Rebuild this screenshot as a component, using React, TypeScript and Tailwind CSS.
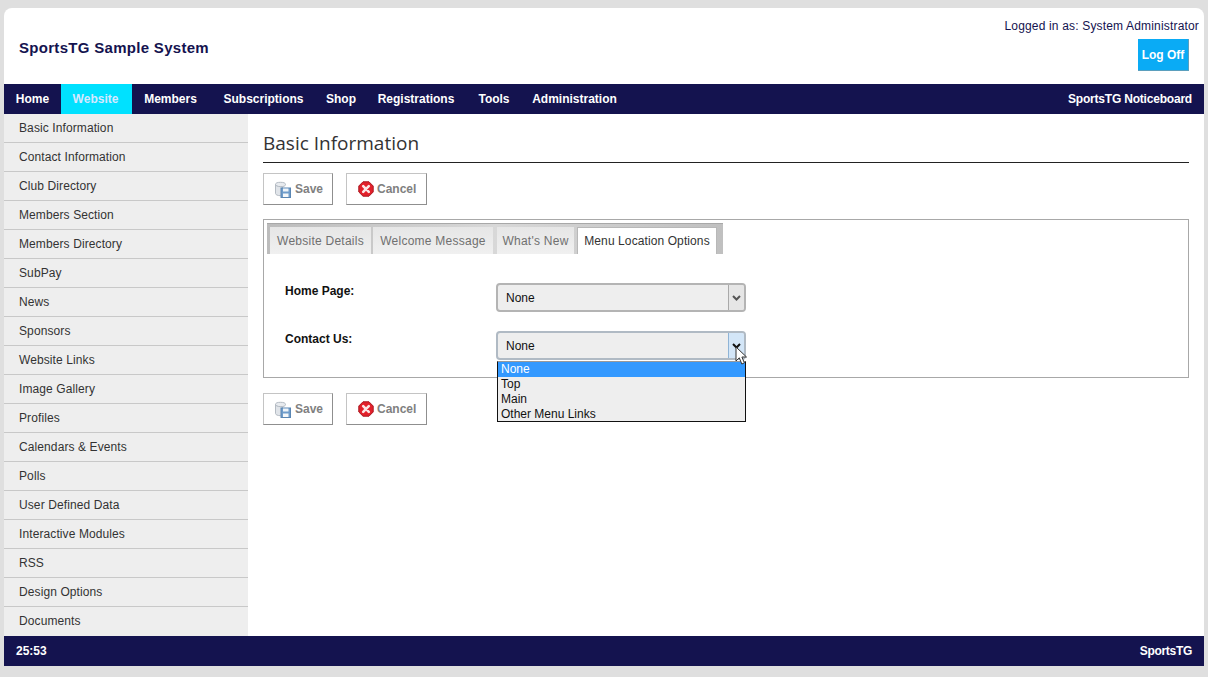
const font = { fontFamily: '"Liberation Sans", Arial, sans-serif' };

const menu = [
  { t: "Home", c: "w-[57px]" },
  { t: "Website", c: "w-[71px] pr-[2px] bg-[#00e1ff] text-[#d6e8ff]" },
  { t: "Members", c: "w-[79px] pr-[2px]" },
  { t: "Subscriptions", c: "w-[103px] pl-[2px]" },
  { t: "Shop", c: "w-[52px] pl-[2px]" },
  { t: "Registrations", c: "w-[100px]" },
  { t: "Tools", c: "w-[54px] pl-[2px]" },
  { t: "Administration", c: "w-[107px] pl-[2px]" },
];
const side = ["Basic Information", "Contact Information", "Club Directory", "Members Section", "Members Directory", "SubPay", "News", "Sponsors", "Website Links", "Image Gallery", "Profiles", "Calendars & Events", "Polls", "User Defined Data", "Interactive Modules", "RSS", "Design Options", "Documents"];

function SaveIcon() {
  return (
    <svg width="17" height="17" viewBox="0 0 17 17" className="shrink-0">
      <ellipse cx="6.5" cy="3.5" rx="5" ry="2.2" fill="#e8ebef" stroke="#b4bbc3" />
      <path d="M1.5 3.5v9c0 1.2 2.2 2.2 5 2.2h2V5.6h-2c-2.8 0-5-.9-5-2.1z" fill="#e0e4e9" stroke="#b4bbc3" />
      <rect x="7" y="7" width="9.5" height="9.5" fill="#6f9ccb" stroke="#5a86b3" />
      <rect x="9" y="7.5" width="5.5" height="3" fill="#eef3f8" />
      <rect x="9" y="12.5" width="5.5" height="3.5" fill="#f4f7fa" />
    </svg>
  );
}

function CancelIcon() {
  return (
    <svg width="16" height="16" viewBox="0 0 16 16" className="shrink-0">
      <path d="M5 .8h6L15.2 5v6L11 15.2H5L.8 11V5z" fill="#e2202a" stroke="#a81820" />
      <path d="M5.2 5.2l5.6 5.6M10.8 5.2l-5.6 5.6" stroke="#fbe6e6" strokeWidth="2.6" strokeLinecap="round" />
    </svg>
  );
}

function Actions() {
  return (
    <div className="flex gap-[13px] h-8">
      <button className="flex items-center w-[70px] h-8 pl-[10px] gap-[4px] bg-white border border-[#c4c4c4] border-r-[#8f8f8f] border-b-[#8f8f8f] text-[12px] font-bold text-[#808080]">
        <SaveIcon />
        <span>Save</span>
      </button>
      <button className="flex items-center w-[81px] h-8 pl-[11px] gap-[3px] bg-white border border-[#c4c4c4] border-r-[#8f8f8f] border-b-[#8f8f8f] text-[12px] font-bold text-[#808080]">
        <CancelIcon />
        <span>Cancel</span>
      </button>
    </div>
  );
}

function Select({ hover }: { hover?: boolean }) {
  return (
    <div className={`flex w-[250px] h-[29px] rounded-[4px] border-2 bg-[#eeeeee] overflow-hidden ${hover ? "border-[#b0bac4]" : "border-[#b4b4b4]"}`}>
      <div className="flex-1 flex items-center pl-2 text-[12px] text-[#111111]">None</div>
      <div className={`w-[16px] flex items-center justify-center border-l ${hover ? "bg-[#d3e6f8] border-[#8fb4d6]" : "bg-[#e6e6e6] border-[#a9a9a9]"}`}>
        <svg width="9" height="6" viewBox="0 0 9 6">
          <path d="M1 1l3.5 3.5L8 1" fill="none" stroke={hover ? "#111111" : "#555555"} strokeWidth="2" />
        </svg>
      </div>
    </div>
  );
}

export default function App() {
  return (
    <div className="h-[677px] w-[1208px] bg-[#dfdfdf] pt-2 px-1 overflow-hidden" style={font}>
      <div className="h-[658px] flex flex-col bg-white rounded-t-[8px] overflow-hidden">
        <header className="h-[76px] shrink-0 flex justify-between">
          <div className="pl-[15px] pt-[31px] text-[15px] leading-[18px] font-bold text-[#14134f] tracking-[0.3px]">SportsTG Sample System</div>
          <div className="flex flex-col items-end pr-[5px] pt-[11px]">
            <div className="text-[12px] leading-[15px] text-[#14134f] tracking-[0.17px]">Logged in as: System Administrator</div>
            <div className="mt-[5px] mr-[10px] w-[51px] h-8 flex items-center justify-center bg-[#0aabf5] border-b border-r border-[#5b9fbd] text-[12px] font-bold text-white">Log Off</div>
          </div>
        </header>
        <nav className="h-[30px] shrink-0 flex items-stretch justify-between bg-[#14134f] text-[12px] font-bold text-white">
          <div className="flex">
            {menu.map((m) => (
              <div key={m.t} className={`flex items-center justify-center whitespace-nowrap ${m.c}`}>{m.t}</div>
            ))}
          </div>
          <div className="flex items-center pr-3 tracking-[-0.2px]">SportsTG Noticeboard</div>
        </nav>
        <div className="flex-1 flex min-h-0">
          <aside className="w-[244px] shrink-0 bg-[#eeeeee]">
            {side.map((s, i) => (
              <div key={s} className={`h-[29px] flex items-center pl-[15px] text-[12px] text-[#333333] tracking-[0.1px] border-b ${i < side.length - 1 ? "border-[#c8c8c8]" : "border-transparent"}`}>{s}</div>
            ))}
          </aside>
          <main className="flex-1 px-[15px] pt-[14px]">
            <h1 className="h-[35px] border-b border-[#222222] text-[19px] leading-[30px] text-[#333333]" style={{ fontFamily: '"Open Sans", sans-serif' }}>Basic Information</h1>
            <div className="mt-[10px]"><Actions /></div>
            <section className="relative mt-[14px] h-[159px] border border-[#a8a8a8] pt-[3px] pl-[3px]">
              <div className="flex items-end h-[31px] w-[456px] pl-[3px] border-t border-[#a8a8a8] bg-gradient-to-r from-[#bcbcbc] via-[#d8d8d8] to-[#c0c0c0] text-[12px] tracking-[0.25px] whitespace-nowrap">
                <div className="w-[101px] h-[27px] flex items-center justify-center bg-gradient-to-b from-[#e6e6e6] to-[#f0f0f0] text-[#707070]">Website Details</div>
                <div className="ml-[2px] w-[120px] h-[27px] flex items-center justify-center bg-gradient-to-b from-[#e6e6e6] to-[#f0f0f0] text-[#707070]">Welcome Message</div>
                <div className="ml-[4px] w-[77px] h-[27px] flex items-center justify-center bg-gradient-to-b from-[#e6e6e6] to-[#f0f0f0] text-[#707070]">What's New</div>
                <div className="ml-[3px] w-[140px] h-[27px] flex items-center justify-center bg-white border-t border-l border-r border-[#b8b8b8] text-[#333333] tracking-[0.1px]">Menu Location Options</div>
              </div>
              <div className="flex items-start pl-[18px] pt-[29px]">
                <div className="w-[211px] pt-[1px] text-[12px] leading-[14px] font-bold text-[#111111]">Home Page:</div>
                <Select />
              </div>
              <div className="flex items-start pl-[18px] pt-[19px]">
                <div className="w-[211px] pt-[1px] text-[12px] leading-[14px] font-bold text-[#111111]">Contact Us:</div>
                <Select hover />
              </div>
              <div className="absolute left-[233px] top-[141px] w-[249px] h-[61px] bg-[#eeeeee] border border-[#111111] border-t-[#9a9a9a] text-[12px] leading-[15px] text-[#111111] z-10">
                <div className="bg-[#3399ff] text-white pl-[3px]">None</div>
                <div className="pl-[3px]">Top</div>
                <div className="pl-[3px]">Main</div>
                <div className="pl-[3px]">Other Menu Links</div>
              </div>
              <svg className="absolute left-[471px] top-[126px] z-20" width="14" height="20" viewBox="0 0 14 20">
                <path d="M1 1v14l3.3-3.2L6.8 18l2.6-1.1-2.5-5.9h4.6z" fill="#ffffff" stroke="#333333" strokeWidth="1" />
              </svg>
            </section>
            <div className="mt-[15px]"><Actions /></div>
          </main>
        </div>
        <footer className="h-[30px] shrink-0 flex items-center justify-between px-3 bg-[#14134f] text-[12px] font-bold text-white">
          <span>25:53</span>
          <span className="tracking-[-0.3px]">SportsTG</span>
        </footer>
      </div>
    </div>
  );
}
